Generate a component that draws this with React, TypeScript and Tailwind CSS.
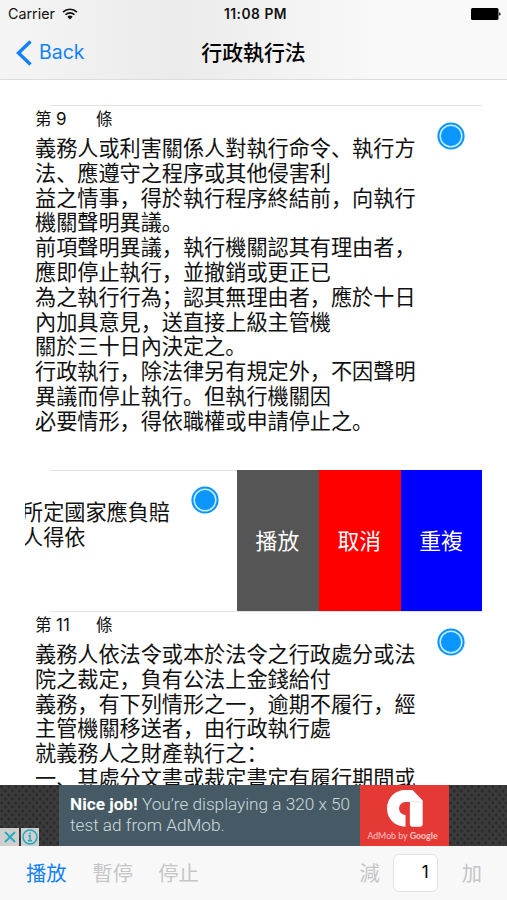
import type { ReactNode } from "react";

const ARTICLE_9 = [
  "義務人或利害關係人對執行命令、執行方",
  "法、應遵守之程序或其他侵害利",
  "益之情事，得於執行程序終結前，向執行",
  "機關聲明異議。",
  "前項聲明異議，執行機關認其有理由者，",
  "應即停止執行，並撤銷或更正已",
  "為之執行行為；認其無理由者，應於十日",
  "內加具意見，送直接上級主管機",
  "關於三十日內決定之。",
  "行政執行，除法律另有規定外，不因聲明",
  "異議而停止執行。但執行機關因",
  "必要情形，得依職權或申請停止之。",
];

const ARTICLE_11 = [
  "義務人依法令或本於法令之行政處分或法",
  "院之裁定，負有公法上金錢給付",
  "義務，有下列情形之一，逾期不履行，經",
  "主管機關移送者，由行政執行處",
  "就義務人之財產執行之：",
  "一、其處分文書或裁定書定有履行期間或",
];

const Wifi = () => (
  <svg viewBox="0 0 16 12" width="16" height="12" fill="none" stroke="#111" strokeWidth="1.6">
    <path d="M1 4.1a10 10 0 0 1 14 0M3.500 6.700a6.400 6.400 0 0 1 9 0" />
    <path d="M8 11.400 5.300 8.800a3.900 3.900 0 0 1 5.400 0z" fill="#111" stroke="none" />
  </svg>
);

const Battery = () => (
  <svg viewBox="0 0 30 12" width="30" height="12">
    <rect x="0" y="0" width="27.5" height="12" rx="1.5" />
    <path d="M28.2 4.2c1.8.3 1.8 3.3 0 3.6z" />
  </svg>
);

const Radio = () => (
  <svg viewBox="0 0 28 28" width="28" height="28" className="flex-none">
    <circle cx="14" cy="14" r="13.6" fill="#0a95ff" />
    <circle cx="14" cy="14" r="10.8" fill="#0a95ff" stroke="#c4ebff" strokeWidth="1.5" />
  </svg>
);

const AdMobLogo = () => (
  <svg viewBox="0 0 107 110" width="36" height="37" fill="#fff">
    <path d="M54 0h22l30 31v71q0 7-7 7H75q-7 0-7-7V36H54a18 18 0 0 0-18 19c0 11 8 18 19 19v35C24 109 0 86 0 55 0 24 24 0 54 0z" />
    <path d="M68 35h38" stroke="#e2dada" strokeWidth="2" />
  </svg>
);

const Mesh = () => (
  <svg width="100%" height="100%" className="block">
    <defs>
      <pattern id="mesh" width="7" height="8" patternUnits="userSpaceOnUse">
        <rect width="7" height="8" fill="#3b3b3b" />
        <ellipse cx="1.75" cy="2" rx="1.600" ry="1.400" fill="#2b2b2b" />
        <ellipse cx="5.25" cy="6" rx="1.600" ry="1.400" fill="#2b2b2b" />
      </pattern>
    </defs>
    <rect width="100%" height="100%" fill="url(#mesh)" />
  </svg>
);

function Lines({ lines }: { lines: string[] }) {
  return (
    <div className="whitespace-nowrap text-[21.15px] leading-[24.8px]">
      {lines.map((line) => (
        <p key={line}>{line}</p>
      ))}
    </div>
  );
}

function Article({ no, lines }: { no: string; lines: string[] }) {
  return (
    <article>
      <div className="ml-[25px] h-px bg-[#e3e3e5]" />
      <div className="flex items-start pl-2.5 pr-[18px]">
        <div className="flex-1 pt-px">
          <h2 className="mb-[5px] flex h-[23px] items-center text-[16.5px] leading-[23px]">
            <span className="w-[21px]">第</span>
            <span className="w-[40px] pt-px font-['Inter','Noto_Sans_CJK_SC',sans-serif] text-[17px]">{no}</span>
            <span>條</span>
          </h2>
          <Lines lines={lines} />
        </div>
        <div className="-ml-7 -mr-px mt-4">
          <Radio />
        </div>
      </div>
    </article>
  );
}

function Action({ color, children }: { color: string; children: ReactNode }) {
  return (
    <button type="button" className={`flex flex-1 items-center justify-center pr-px text-[21.8px] text-white ${color}`}>
      {children}
    </button>
  );
}

export default function App() {
  return (
    <div className="flex h-[900px] w-[507px] flex-col overflow-hidden bg-white font-['Noto_Sans_CJK_SC',sans-serif] text-[#111]">
      <header className="h-20 flex-none border-b border-[#dcdcdc] bg-linear-to-r from-[#f5f5f5] via-[#ebebeb] via-35% to-[#f9f9f9] to-75%">
        <div className="grid h-7 grid-cols-[1fr_auto_1fr] items-center pl-2 pr-1.5 font-['Inter',sans-serif]">
          <div className="flex items-center gap-[7px]">
            <span className="text-[14.3px]">Carrier</span>
            <Wifi />
          </div>
          <span className="pl-0.5 text-[13.8px] font-semibold tracking-[0.5px]">11:08 PM</span>
          <div className="flex justify-end">
            <Battery />
          </div>
        </div>
        <div className="grid h-12 grid-cols-[1fr_auto_1fr] items-center px-4">
          <a href="#" className="flex items-center gap-[7px] pt-px font-['Inter',sans-serif] text-[19.5px] text-[#1280f8]">
            <svg viewBox="0 0 16 26" width="16" height="26" fill="none" stroke="currentColor" strokeWidth="3.4">
              <path d="M14.500 1.500 2.500 13l12 11.500" />
            </svg>
            Back
          </a>
          <h1 className="text-[20.9px] font-medium text-black">行政執行法</h1>
        </div>
      </header>

      <main className="flex h-[705px] flex-none flex-col overflow-hidden px-[25px] pt-[25px]">
        <div className="h-[365px] flex-none">
          <Article no="9" lines={ARTICLE_9} />
        </div>

        {/* swiped row */}
        <div className="flex h-[141px] w-[457.5px] flex-none">
          <div className="w-[212px] flex-none overflow-hidden">
            <div className="ml-[25px] h-px bg-[#e3e3e5]" />
            <div className="flex items-start">
              <div className="-ml-[3px] w-[168.500px] pt-7">
                <Lines lines={["所定國家應負賠", "人得依"]} />
              </div>
              <div className="mt-[15px]">
                <Radio />
              </div>
            </div>
          </div>
          <div className="flex flex-1">
            <Action color="bg-[#555555]">播放</Action>
            <Action color="bg-[#ff0000]">取消</Action>
            <Action color="bg-[#0000ff]">重複</Action>
          </div>
        </div>

        <Article no="11" lines={ARTICLE_11} />
      </main>

      <aside className="flex h-[61px] flex-none">
        <div className="relative w-[59px] flex-none">
          <Mesh />
          <div className="absolute bottom-0 left-0 flex gap-0.5">
            <svg viewBox="0 0 18 18" width="19" height="18" className="bg-[#cfcfcf]">
              <path d="m4.500 4 10 10m0-10-10 10" stroke="#23a9bd" strokeWidth="1.800" />
            </svg>
            <svg viewBox="0 0 18 18" width="18" height="18" fill="none" stroke="#23a9bd" strokeWidth="1.500" className="bg-[#cfcfcf]">
              <circle cx="9" cy="9" r="7" />
              <path d="M7.500 7.800H9v4.700M7 12.700h4M9 4.600v1.600" />
            </svg>
          </div>
        </div>
        <div className="w-[301px] flex-none whitespace-nowrap bg-[#455a64] pl-[11px] pt-[9px] font-['Roboto',sans-serif] text-[17.2px] font-light leading-[20.5px] text-[#cfdbdf]">
          <p>
            <b className="font-bold text-white">Nice job!</b> You’re displaying a 320 x 50
          </p>
          <p>test ad from AdMob.</p>
        </div>
        <div className="flex w-[89px] flex-none flex-col items-center bg-[#e53935] pt-[5px]">
          <AdMobLogo />
          <span className="whitespace-nowrap pr-1 font-['Lato',sans-serif] text-[8.8px] leading-[18px] text-[#fbc4c1]">
            AdMob by <span className="font-bold">Google</span>
          </span>
        </div>
        <div className="flex-1">
          <Mesh />
        </div>
      </aside>

      <footer className="flex flex-1 items-center bg-[#f8f8f8] pl-[26px] pr-[25px] text-[20.3px] text-[#c5c5c7]">
        <button type="button" className="mr-[26px] pb-0.5 text-[#1280f8]">播放</button>
        <button type="button" className="mr-[25px] pb-0.5">暫停</button>
        <button type="button" className="pb-0.5">停止</button>
        <button type="button" className="ml-auto pb-0.5">減</button>
        <div className="ml-[13px] mr-6 flex h-[38px] w-[45px] items-center justify-end rounded-[6px] border border-[#e3e3e3] bg-white pr-2 font-['Inter',sans-serif] text-[17px] text-black">
          1
        </div>
        <button type="button" className="pb-0.5">加</button>
      </footer>
    </div>
  );
}
